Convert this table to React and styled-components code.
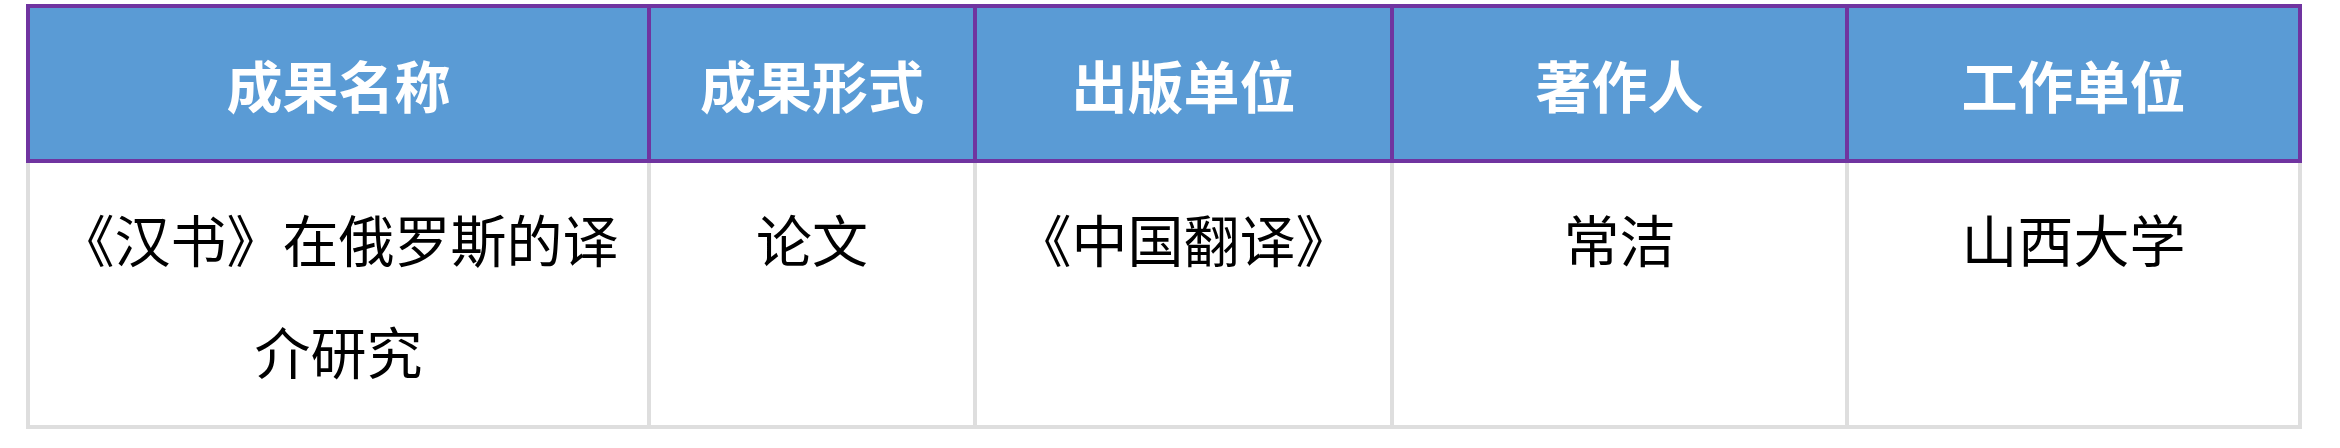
import styled, { createGlobalStyle } from "styled-components";

const GlobalStyle = createGlobalStyle`
  html, body {
    margin: 0;
    padding: 0;
    background: #ffffff;
  }
  body {
    font-family: "Noto Sans CJK SC", "Noto Sans", sans-serif;
  }
`;

const Page = styled.div`
  padding: 4px 0 0 26px;
`;

const Table = styled.table`
  width: 2272px;
  table-layout: fixed;
  border-collapse: collapse;
`;

const HeadCell = styled.th`
  height: 151px;
  padding: 0 20px;
  background: #5a9bd5;
  border: 4px solid #7034a0;
  color: #ffffff;
  font-size: 56px;
  font-weight: 700;
  text-align: center;
  vertical-align: middle;
`;

const Cell = styled.td`
  padding: 19px 24px;
  border: 4px solid #dedede;
  color: #000000;
  font-size: 56px;
  line-height: 112px;
  text-align: center;
  vertical-align: top;
`;

const columns = [
  { title: "成果名称", width: 621 },
  { title: "成果形式", width: 326 },
  { title: "出版单位", width: 417 },
  { title: "著作人", width: 455 },
  { title: "工作单位", width: 453 },
];

const rows = [
  ["《汉书》在俄罗斯的译介研究", "论文", "《中国翻译》", "常洁", "山西大学"],
];

export default function App() {
  return (
    <>
      <GlobalStyle />
      <Page>
        <Table>
          <colgroup>
            {columns.map((c) => (
              <col key={c.title} style={{ width: c.width }} />
            ))}
          </colgroup>
          <thead>
            <tr>
              {columns.map((c) => (
                <HeadCell key={c.title}>{c.title}</HeadCell>
              ))}
            </tr>
          </thead>
          <tbody>
            {rows.map((row, i) => (
              <tr key={i}>
                {row.map((value, j) => (
                  <Cell key={j}>{value}</Cell>
                ))}
              </tr>
            ))}
          </tbody>
        </Table>
      </Page>
    </>
  );
}
